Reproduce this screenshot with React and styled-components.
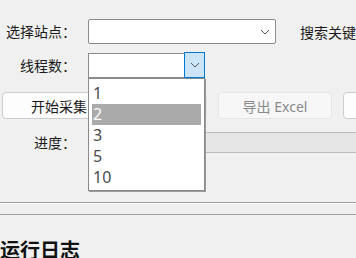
import React from 'react'
import styled, { createGlobalStyle } from 'styled-components'

const GlobalStyle = createGlobalStyle`
html, body {
  margin:0;
  padding:0;
  background:#f0f0f0;
  overflow:hidden;
}
body {
  font-family:"Noto Sans", "Noto Sans CJK SC", sans-serif;
  color:#1a1a1a;
}
`

const threads = ['1', '2', '3', '5', '10']

function Chevron() {
  return (
    <svg width="10" height="6" viewBox="0 0 10 6">
      <path d="M1 1 L5 5 L9 1" fill="none" stroke="#5a5a5a" strokeWidth="1" />
    </svg>
  )
}

function App() {
  return (
    <Page>
      <GlobalStyle />
      <Row>
        <Label>选择站点：</Label>
        <SiteSelect>
          <Chevron />
        </SiteSelect>
        <SearchLabel>搜索关键字：</SearchLabel>
      </Row>
      <Row gap={9}>
        <Label>线程数：</Label>
        <Combo>
          <ComboButton>
            <Chevron />
          </ComboButton>
          <List>
            {threads.map((t) => (
              <Item key={t} selected={t === '2'}>{t}</Item>
            ))}
          </List>
        </Combo>
      </Row>
      <Buttons>
        <Button width={114}>开始采集</Button>
        <Button width={80} disabled>停止采集</Button>
        <Button width={114} disabled>导出 Excel</Button>
        <Button width={114}>清空日志</Button>
      </Buttons>
      <Row gap={11}>
        <Label>进度：</Label>
        <Progress />
      </Row>
      <Separator />
      <Heading>运行日志</Heading>
    </Page>
  )
}

export default App

const Page = styled.div`
padding-top:19px;
width:600px;
`
const Row = styled.div`
display:flex;
align-items:center;
margin-top:${props => props.gap || 0}px;
position:relative;
`
const Label = styled.div`
width:76px;
margin-right:12px;
text-align:right;
font-size:14px;
line-height:25px;
flex-shrink:0;
`
const SiteSelect = styled.div`
box-sizing:border-box;
width:188px;
height:25px;
background:#fff;
border:1px solid #8a8a8a;
border-radius:2px;
display:flex;
align-items:center;
justify-content:flex-end;
padding-right:5px;
`
const SearchLabel = styled.div`
margin-left:24px;
font-size:14px;
white-space:nowrap;
`
const Combo = styled.div`
box-sizing:border-box;
position:relative;
width:117px;
height:25px;
background:#fff;
border:1px solid #8a8a8a;
border-right:none;
display:flex;
justify-content:flex-end;
z-index:2;
`
const ComboButton = styled.div`
box-sizing:border-box;
width:21px;
height:26px;
margin-top:-2px;
margin-bottom:-1px;
background:#cce4f7;
border:1px solid #0078d7;
display:flex;
align-items:center;
justify-content:center;
`
const List = styled.div`
position:absolute;
left:-1px;
top:24px;
box-sizing:border-box;
width:117px;
padding:4px 3px 2px;
background:#fff;
border:1px solid #8a8a8a;
box-shadow:1px 1px 0 #9a9a9a;
`
const Item = styled.div`
height:21px;
line-height:21px;
font-size:16px;
padding-left:1px;
color:${props => props.selected ? '#fff' : '#4a4a4a'};
background:${props => props.selected ? '#aaaaaa' : 'transparent'};
`
const Buttons = styled.div`
display:flex;
gap:11px;
margin-top:14px;
padding-left:2px;
`
const Button = styled.div`
box-sizing:border-box;
width:${props => props.width}px;
height:27px;
flex-shrink:0;
border:1px solid ${props => props.disabled ? '#e6e6e6' : '#cccccc'};
border-radius:4px;
background:${props => props.disabled ? '#f7f7f7' : '#fdfdfd'};
color:${props => props.disabled ? '#8a8a8a' : '#1a1a1a'};
font-size:14px;
display:flex;
align-items:center;
justify-content:center;
white-space:nowrap;
`
const Progress = styled.div`
box-sizing:border-box;
width:400px;
height:21px;
background:#e6e6e6;
border:1px solid #bcbcbc;
`
const Separator = styled.div`
margin-top:47px;
height:11px;
border-top:1px solid #a0a0a0;
border-bottom:1px solid #a0a0a0;
box-shadow:inset 0 1px 0 #fff;
`
const Heading = styled.h2`
margin:22px 0 0 0;
font-size:20px;
font-weight:700;
line-height:28px;
color:#111;
`
